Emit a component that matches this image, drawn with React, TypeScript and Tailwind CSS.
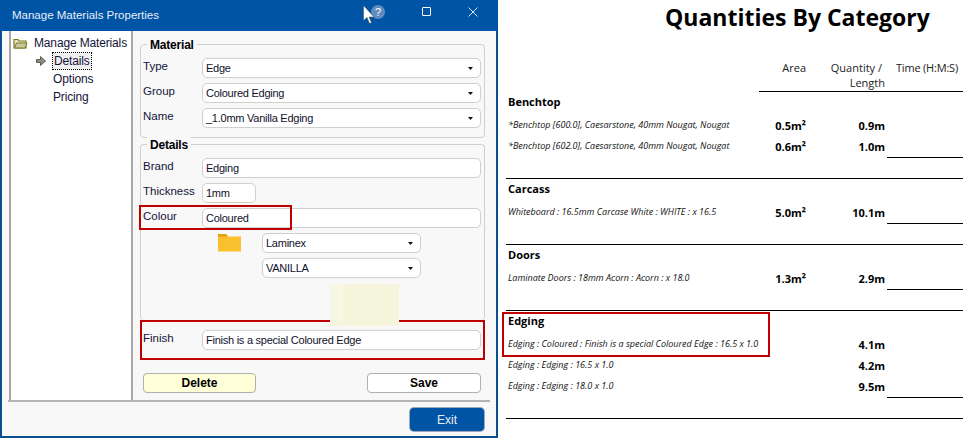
import React from 'react';

const UI = 'font-["Liberation_Sans",sans-serif]';
const REPORT = 'font-["Open_Sans",sans-serif]';

const Caret = () => (
  <svg width="5" height="3" viewBox="0 0 5 3" className="shrink-0">
    <path d="M0 0h5L2.500 3z" fill="#111" />
  </svg>
);

const Field: React.FC<{ value: string; select?: boolean; className?: string }> = ({ value, select, className = '' }) => (
  <div
    className={`flex h-[20px] items-center justify-between rounded-[5px] border border-[#cfcfcf] bg-white pl-[3px] pr-[7px] text-[11px] leading-none tracking-[-0.25px] text-[#10102a] ${className}`}
  >
    <span>{value}</span>
    {select ? <Caret /> : null}
  </div>
);

const Row: React.FC<{ label: string; children: React.ReactNode }> = ({ label, children }) => (
  <div className="flex h-[20px] items-center">
    <span className="w-[59px] pb-[2px] text-[11.500px] leading-none text-[#14143a]">{label}</span>
    {children}
  </div>
);

const Group: React.FC<{ title: string; className?: string; children: React.ReactNode }> = ({ title, className = '', children }) => (
  <div className={`rounded-[4px] border border-[#cfcfcf] ${className}`}>
    <div className="-mt-[9px] mb-[4px] ml-[6px] h-[18px] w-fit bg-[#f8f8f8] px-[3px] text-[12px] font-bold leading-[18px] tracking-[-0.2px] text-black">{title}</div>
    {children}
  </div>
);

const ManageMaterials = () => (
  <div className={`flex h-[438px] w-[498px] shrink-0 flex-col border-x-2 border-b-2 border-[#0b4f92] bg-[#f8f8f8] ${UI}`}>
    <div className="-mx-[2px] flex h-[31px] shrink-0 items-center bg-[#0054a6] pl-[12px] text-[11.500px] text-[#e8eef6]">
      <span>Manage Materials Properties</span>
      <div className="relative ml-auto flex items-center">
        <svg width="12" height="19" viewBox="0 0 12 19" className="absolute -top-[7px] -left-[8px] z-10">
          <path d="M0.500 0.500v15l3.500-3 2.500 6 2-1-2.500-5.500h5z" fill="#fff" stroke="#444" strokeWidth="0.5" />
        </svg>
        <div className="-mt-[7px] mr-[37px] flex h-[14px] w-[14px] items-center justify-center rounded-full bg-[#5e8cc0] text-[11px] leading-none text-white">?</div>
        <div className="-mt-[8px] mr-[37px] h-[9px] w-[9px] rounded-[1px] border border-white" />
        <svg width="10" height="10" viewBox="0 0 10 10" className="mr-[20px] -mt-[8px]">
          <path d="M0.500 0.500l9 9M9.500 0.500l-9 9" stroke="#d8e4f0" strokeWidth="1" />
        </svg>
      </div>
    </div>

    <div className="flex h-[369px] shrink-0 pl-[7px]">
      <div className="h-full w-[124px] border-x-2 border-b-0 border-[#a8a8a8] bg-white pl-[2px] pt-[3px] text-[12px] leading-[18px] tracking-[-0.15px] text-[#14143a]">
        <div className="flex h-[18px] items-center gap-[6px] whitespace-nowrap">
          <svg width="15" height="12" viewBox="0 0 15 12" className="shrink-0">
            <path d="M1 2.500h4l1 1.500h7v7H1z" fill="#e8e4c0" stroke="#7a7a20" strokeWidth="1.200" />
            <path d="M1.500 11l2-5h10.500l-2 5z" fill="#c8c8a0" stroke="#7a7a20" strokeWidth="1" />
          </svg>
          <span>Manage Materials</span>
        </div>
        <div className="flex h-[18px] items-center pl-[23px]">
          <svg width="10" height="10" viewBox="0 0 10 10" className="mr-[6px] shrink-0">
            <path d="M0.500 3.500h4v-3l5 4.500-5 4.500v-3h-4z" fill="#8a8f80" stroke="#333" strokeWidth="0.700" />
          </svg>
          <span className="border border-dotted border-black bg-[#f0f0f0] px-[1px] leading-[16px]">Details</span>
        </div>
        <div className="h-[18px] pl-[40px]">Options</div>
        <div className="h-[18px] pl-[40px]">Pricing</div>
      </div>

      <div className="w-[352px] pl-[7px] pt-[13px]">
        <Group title="Material" className="h-[94px]">
          <div className="flex flex-col gap-[5px] pl-[2px] pr-[2px]">
            <Row label="Type"><Field value="Edge" select className="w-[279px]" /></Row>
            <Row label="Group"><Field value="Coloured Edging" select className="w-[279px]" /></Row>
            <Row label="Name"><Field value="_1.0mm Vanilla Edging" select className="w-[279px]" /></Row>
          </div>
        </Group>
        <Group title="Details" className="mt-[6px] h-[176px] border-b-0">
          <div className="mt-[1px] flex flex-col gap-[5px] pl-[2px] pr-[2px]">
            <Row label="Brand"><Field value="Edging" className="w-[279px]" /></Row>
            <Row label="Thickness"><Field value="1mm" className="w-[54px]" /></Row>
            <Row label="Colour"><Field value="Coloured" className="w-[279px]" /></Row>
            <div className="flex">
              <svg width="23" height="19" viewBox="0 0 23 19" className="ml-[75px] shrink-0">
                <path d="M0 1.500h8l2 2h13v15h-23z" fill="#fbc02d" />
                <path d="M0 1h8l2 2.500h-10z" fill="#e0a010" />
              </svg>
              <div className="ml-[21px] flex flex-col gap-[5px]">
                <Field value="Laminex" select className="w-[159px]" />
                <Field value="VANILLA" select className="w-[159px]" />
              </div>
            </div>
            <div className="ml-[187px] mt-[1px] flex h-[42px] w-[69px] bg-[#f5f5dc]">
              <div className="h-[37px] w-[13px] bg-[#f7f7e3]" />
            </div>
          </div>
        </Group>
        <div className="flex h-[40px] items-center border-2 border-[#c00000] pl-[1px] pr-[2px]">
          <Row label="Finish"><Field value="Finish is a special Coloured Edge" className="w-[279px]" /></Row>
        </div>
        <div className="mt-[13px] flex items-center justify-between pl-[3px] pr-[4px] text-[12px] font-bold text-black">
          <div className="flex h-[20px] w-[113px] items-center justify-center rounded-[4px] border border-[#b0b0b0] bg-[#ffffd8]">Delete</div>
          <div className="flex h-[20px] w-[114px] items-center justify-center rounded-[4px] border border-[#b0b0b0] bg-white">Save</div>
        </div>
      </div>
    </div>

    <div className="mx-[6px] h-[2px] w-[482px] shrink-0 bg-[#b4b4b4]" />
    <div className="flex justify-end pr-[12px] pt-[6px]">
      <div className="flex h-[23px] w-[74px] items-center justify-center rounded-[4px] bg-[#0054a6] text-[12px] text-[#e8eef6] ring-1 ring-[#9aa8b8]">Exit</div>
    </div>
  </div>
);

type ItemRow = { name: string; area?: string; qty: string; last?: boolean };

const Section: React.FC<{ title: string; rows: ItemRow[] }> = ({ title, rows }) => (
  <div className="ml-[8px] border-b border-black pb-[20px] pl-[2px] pt-[2px]">
    <div className="h-[16px] text-[11px] font-bold leading-[16px] text-black">{title}</div>
    <div className="mt-[6px] flex flex-col">
      {rows.map((row) => (
        <div key={row.name} className="flex h-[21px] items-center">
          <span className="w-[251px] whitespace-nowrap pb-[4px] text-[9px] italic leading-none text-[#111]">{row.name}</span>
          <span className="w-[47px] pb-[2px] text-right text-[11px] font-bold leading-none text-black">{row.area}</span>
          <span className="w-[79px] pb-[2px] text-right text-[11px] font-bold leading-none text-black">{row.qty}</span>
          <span className={`ml-[2px] h-full flex-1 ${row.last ? 'border-b border-black' : ''}`} />
        </div>
      ))}
    </div>
  </div>
);

const Report = () => (
  <div className={`relative min-w-0 flex-1 bg-white ${REPORT}`}>
    <h1 className="pl-[167px] pt-[1px] text-[23px] font-bold leading-[32px] whitespace-nowrap text-black">Quantities By Category</h1>
    <div className="ml-[261px] mt-[27px] flex h-[32px] border-b border-black text-[11px] leading-[15px] text-[#222]">
      <span className="w-[47px] text-right">Area</span>
      <span className="w-[79px] text-right"><span className="pr-[3px]">Quantity /</span><br />Length</span>
      <span className="ml-[11px] whitespace-nowrap tracking-[-0.2px]">Time (H:M:S)</span>
    </div>
    <Section title="Benchtop" rows={[
      { name: '*Benchtop [600.0], Caesarstone, 40mm Nougat, Nougat', area: '0.5m²', qty: '0.9m' },
      { name: '*Benchtop [602.0], Caesarstone, 40mm Nougat, Nougat', area: '0.6m²', qty: '1.0m', last: true },
    ]} />
    <Section title="Carcass" rows={[
      { name: 'Whiteboard : 16.5mm Carcase White : WHITE :  x 16.5', area: '5.0m²', qty: '10.1m', last: true },
    ]} />
    <Section title="Doors" rows={[
      { name: 'Laminate Doors : 18mm Acorn : Acorn :  x 18.0', area: '1.3m²', qty: '2.9m', last: true },
    ]} />
    <Section title="Edging" rows={[
      { name: 'Edging : Coloured : Finish is a special Coloured Edge : 16.5 x 1.0', qty: '4.1m' },
      { name: 'Edging : Edging : 16.5 x 1.0', qty: '4.2m' },
      { name: 'Edging : Edging : 18.0 x 1.0', qty: '9.5m', last: true },
    ]} />
    <div className="pointer-events-none absolute left-[4px] top-[312px] h-[45px] w-[268px] border-2 border-[#c00000]" />
  </div>
);

export default function App() {
  return (
    <div className="relative flex h-[438px] w-[963px] overflow-hidden bg-white">
      <ManageMaterials />
      <Report />
      <div className="pointer-events-none absolute left-[139px] top-[205px] h-[25px] w-[153px] border-2 border-[#c00000]" />
    </div>
  );
}
